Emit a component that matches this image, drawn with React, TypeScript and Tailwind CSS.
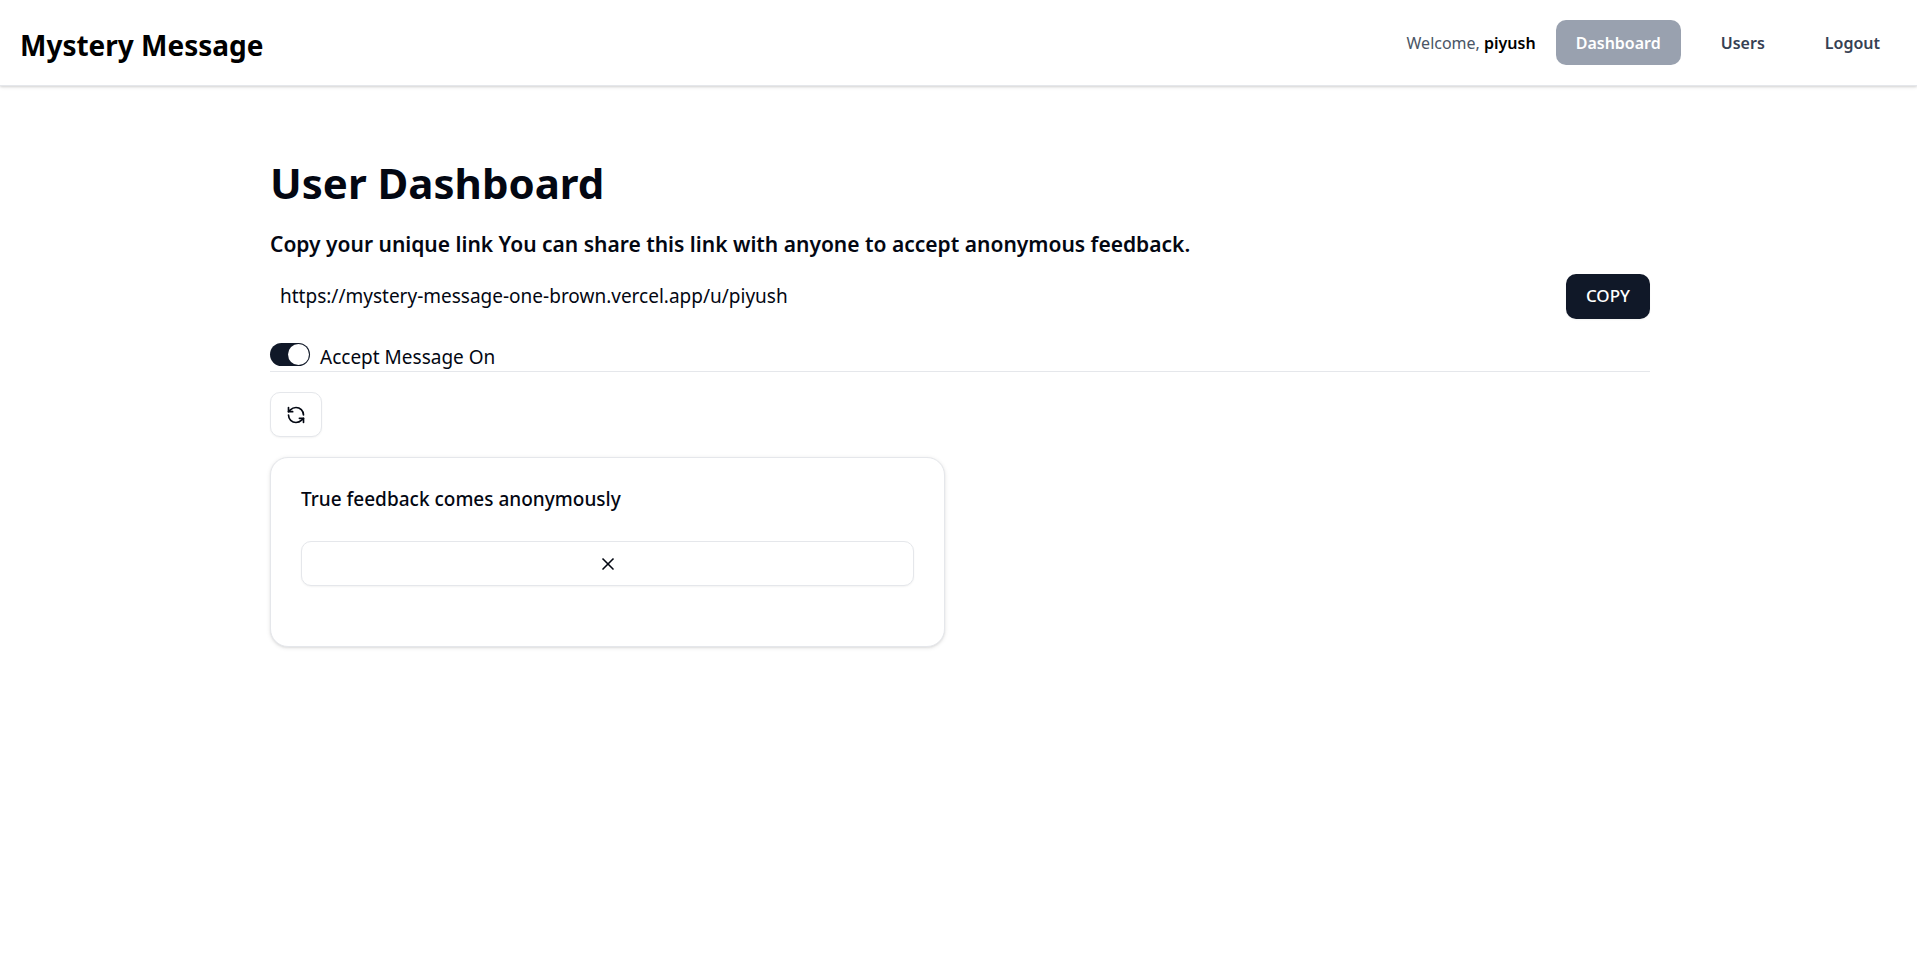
import { useState } from 'react';
import type { ReactNode } from 'react';
import { RefreshCcw, X } from 'lucide-react';

const PROFILE_URL = 'https://mystery-message-one-brown.vercel.app/u/piyush';

function NavLink({ href, active = false, children }: { href: string; active?: boolean; children: ReactNode }) {
  const tone = active ? 'bg-gray-400 text-white' : 'text-gray-700';
  return (
    <a href={href} className={`flex h-[45px] items-center rounded-[10px] px-5 text-[16px] font-semibold ${tone}`}>
      {children}
    </a>
  );
}

function Header() {
  return (
    <header className="border-b border-gray-200 bg-white p-5 pr-[17px] shadow-[0_1px_4px_rgba(0,0,0,0.1),0_1px_2px_rgba(0,0,0,0.1)]">
      <div className="flex items-center justify-between">
        <a href="#home" className="pt-1 text-[28px] leading-[40px] font-bold text-black">
          Mystery Message
        </a>
        <nav className="flex items-center gap-5">
          <span className="text-[16px] text-gray-600">
            Welcome, <span className="font-semibold text-black">piyush</span>
          </span>
          <NavLink href="#dashboard" active>
            Dashboard
          </NavLink>
          <NavLink href="#users">Users</NavLink>
          <NavLink href="#logout">Logout</NavLink>
        </nav>
      </div>
    </header>
  );
}

function MessageCard({ text }: { text: string }) {
  return (
    <article className="flex flex-col gap-[30px] rounded-[18px] border border-gray-200 bg-white px-[30px] pt-[30px] pb-[60px] shadow-[0_1px_4px_rgba(0,0,0,0.1),0_1px_2px_rgba(0,0,0,0.06)]">
      <h3 className="text-[19px] leading-[23px] font-medium">{text}</h3>
      <button
        type="button"
        aria-label="Delete message"
        className="flex h-[45px] w-full items-center justify-center rounded-[10px] border border-gray-200 bg-white shadow-xs"
      >
        <X size={20} />
      </button>
    </article>
  );
}

export default function App() {
  const [accepting, setAccepting] = useState(true);

  return (
    <div className="min-h-screen bg-white font-['Noto_Sans','Open_Sans',sans-serif] text-gray-950">
      <Header />
      <div className="pl-[3px]">
        <main className="mx-auto my-10 max-w-[1440px] p-[30px]">
          <h1 className="mb-4 text-[42px] leading-[54px] font-bold">User Dashboard</h1>

          <section className="mb-5">
            <h2 className="mb-2 text-[21px] leading-[37px] font-semibold">
              Copy your unique link You can share this link with anyone to accept anonymous feedback.
            </h2>
            <div className="flex items-center">
              <input
                type="text"
                aria-label="Your unique link"
                value={PROFILE_URL}
                readOnly
                className="h-[50px] w-full p-2.5 text-[19px] outline-none"
              />
              <button
                type="button"
                className="h-[45px] shrink-0 rounded-[10px] bg-gray-900 px-5 text-[17px] font-medium text-white shadow-xs"
              >
                COPY
              </button>
            </div>
          </section>

          <label className="flex h-[30px] cursor-pointer gap-2.5">
            <span className="flex pt-0.5">
              <input
                type="checkbox"
                role="switch"
                checked={accepting}
                onChange={(e) => setAccepting(e.target.checked)}
                className="peer sr-only"
              />
              <span className="flex h-[23px] w-10 items-center rounded-full bg-gray-200 px-px peer-checked:justify-end peer-checked:bg-gray-900">
                <span className="size-[21px] rounded-full bg-white" />
              </span>
            </span>
            <span className="text-[19px] leading-[32px]">Accept Message {accepting ? 'On' : 'Off'}</span>
          </label>
          <hr className="border-gray-200" />

          <button
            type="button"
            aria-label="Refresh messages"
            className="mt-5 flex h-[45px] w-[52px] items-center justify-center rounded-[10px] border border-gray-200 bg-white shadow-xs"
          >
            <RefreshCcw size={20} />
          </button>

          <div className="mt-5 grid grid-cols-1 gap-[30px] md:grid-cols-2">
            <MessageCard text="True feedback comes anonymously" />
          </div>
        </main>
      </div>
    </div>
  );
}
